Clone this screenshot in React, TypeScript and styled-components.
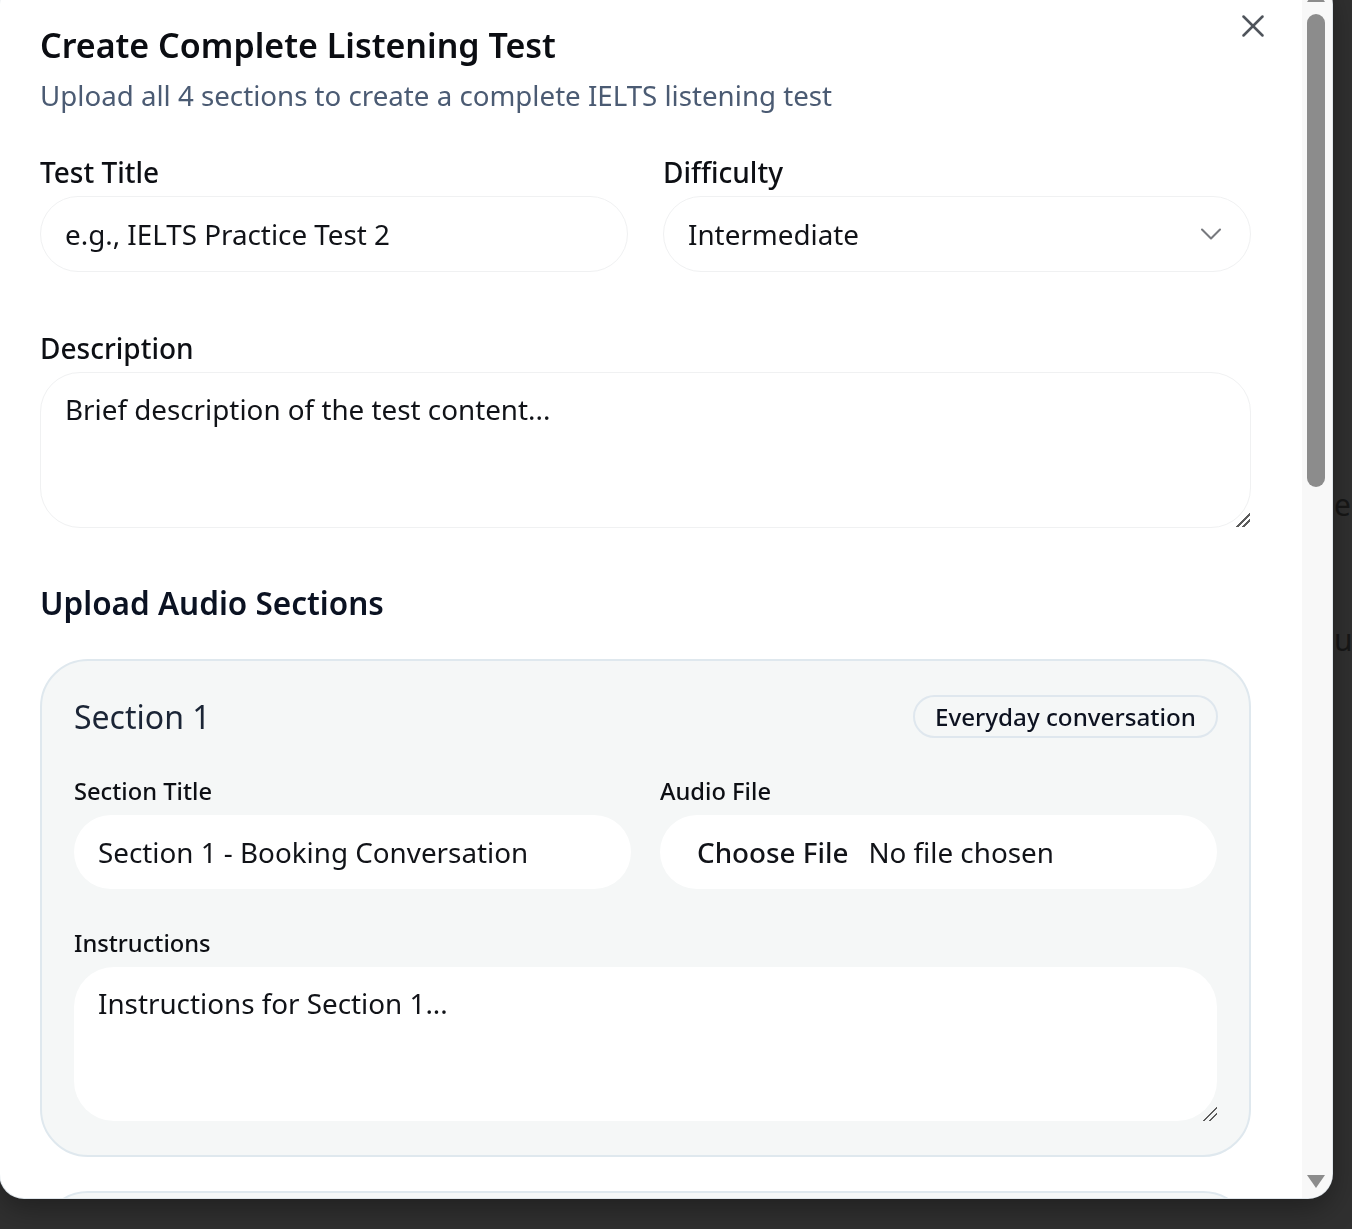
import React from "react";
import styled, { createGlobalStyle } from "styled-components";
import { X, ChevronDown } from "lucide-react";

const GlobalStyle = createGlobalStyle`
  html, body { margin: 0; padding: 0; }
  body {
    background: #303030;
    font-family: "Noto Sans", "Open Sans", sans-serif;
    overflow: hidden;
  }
  * { box-sizing: border-box; }
`;

const BackPage = styled.div`
  min-height: 100vh;
  padding: 487px 0 0 1334px;
  display: flex;
  flex-direction: column;
  gap: 99px;
`;

const BackText = styled.div`
  font-size: 30px;
  color: #171717;
  white-space: nowrap;
  line-height: 36px;
`;

const Modal = styled.div`
  position: fixed;
  left: 0;
  top: -20px;
  width: 1332px;
  height: 1218px;
  background: #ffffff;
  border-radius: 24px;
  box-shadow: 0 0 0 1px #dfe5ea, 0 10px 30px rgba(0, 0, 0, 0.35);
  overflow: hidden;
  display: flex;
`;

const ScrollArea = styled.div`
  flex: 1;
  min-width: 0;
  overflow: hidden;
  padding: 43px 51px 40px 40px;
`;

const ScrollTrack = styled.div`
  width: 30px;
  flex: none;
  background: #f8f8f8;
  display: flex;
  flex-direction: column;
  align-items: flex-start;
  padding-left: 5px;
`;

const ArrowButton = styled.div<{ $down?: boolean }>`
  height: 30px;
  width: 18px;
  flex: none;
  display: flex;
  justify-content: center;
  align-items: ${(p) => (p.$down ? "flex-start" : "flex-end")};
  padding: ${(p) => (p.$down ? "7px 0 0" : "0 0 8px")};
  margin-top: ${(p) => (p.$down ? "auto" : "0")};

  &::before {
    content: "";
    width: 0;
    height: 0;
    border-left: 9px solid transparent;
    border-right: 9px solid transparent;
    ${(p) =>
      p.$down
        ? "border-top: 13px solid #8c8c8c;"
        : "border-bottom: 13px solid #8c8c8c;"}
  }
`;

const Thumb = styled.div`
  margin-top: 4px;
  width: 18px;
  height: 473px;
  border-radius: 9px;
  background: #8c8c8c;
`;

const CloseButton = styled.button`
  position: absolute;
  top: 27px;
  right: 60px;
  width: 38px;
  height: 38px;
  padding: 0;
  border: none;
  background: transparent;
  color: #4f545b;
  display: flex;
  align-items: center;
  justify-content: center;
  cursor: pointer;
`;

const Header = styled.header`
  display: flex;
  flex-direction: column;
  gap: 10px;
  margin-bottom: 41px;
`;

const Title = styled.h1`
  margin: 0;
  font-size: 34px;
  line-height: 44px;
  font-weight: 600;
  color: #0b0d12;
`;

const Subtitle = styled.p`
  margin: 0;
  font-size: 27.7px;
  line-height: 36px;
  color: #4b5b73;
`;

const Grid = styled.div<{ $gap: number }>`
  display: grid;
  grid-template-columns: 1fr 1fr;
  column-gap: ${(p) => p.$gap}px;
`;

const Field = styled.div<{ $mb?: number; $gap?: number }>`
  display: flex;
  flex-direction: column;
  gap: ${(p) => p.$gap ?? 6}px;
  margin-bottom: ${(p) => p.$mb ?? 0}px;
`;

const Label = styled.label<{ $small?: boolean }>`
  font-size: ${(p) => (p.$small ? 23.7 : 28)}px;
  line-height: ${(p) => (p.$small ? 32 : 36)}px;
  font-weight: 500;
  color: #0d0f14;
`;

const TextInput = styled.input<{ $filled?: boolean }>`
  height: ${(p) => (p.$filled ? 74 : 76)}px;
  border-radius: 9999px;
  border: ${(p) => (p.$filled ? "none" : "1px solid #f0f1f2")};
  background: #ffffff;
  padding: 0 24px;
  font-family: inherit;
  font-size: 27.8px;
  color: #111318;
  outline: none;
  &::placeholder {
    color: #111318;
    opacity: 1;
  }
`;

const SelectWrap = styled.div`
  position: relative;
  display: flex;
`;

const Select = styled.select`
  appearance: none;
  flex: 1;
  height: 76px;
  border-radius: 9999px;
  border: 1px solid #f0f1f2;
  background: #ffffff;
  padding: 0 24px;
  font-family: inherit;
  font-size: 27.8px;
  color: #111318;
  outline: none;
`;

const SelectIcon = styled.span`
  position: absolute;
  right: 22px;
  top: 20px;
  width: 36px;
  height: 36px;
  color: #77797e;
  pointer-events: none;
  display: flex;
`;

const TextArea = styled.textarea<{ $filled?: boolean }>`
  height: ${(p) => (p.$filled ? 154 : 156)}px;
  border-radius: 40px;
  border: ${(p) => (p.$filled ? "none" : "1px solid #f0f1f2")};
  background: #ffffff;
  padding: 18px 24px;
  font-family: inherit;
  font-size: 27.8px;
  line-height: 36px;
  color: #111318;
  resize: vertical;
  outline: none;
  &::placeholder {
    color: #111318;
    opacity: 1;
  }
  &::-webkit-scrollbar {
    width: 18px;
    height: 18px;
  }
  &::-webkit-resizer {
    background: linear-gradient(
      135deg,
      transparent 0 52%,
      #5c5c5c 52% 60%,
      transparent 60% 72%,
      #5c5c5c 72% 80%,
      transparent 80%
    );
  }
`;

const SectionHeading = styled.h2`
  margin: 55px 0 36px;
  font-size: 31.5px;
  line-height: 40px;
  font-weight: 600;
  color: #0b1222;
`;

const CardList = styled.div`
  display: flex;
  flex-direction: column;
  gap: 34px;
`;

const Card = styled.section`
  background: #f5f7f7;
  border: 2px solid #dfe8ee;
  border-radius: 48px;
  padding: 34px 32px 34px;
  display: flex;
  flex-direction: column;
`;

const CardHeader = styled.div`
  display: flex;
  align-items: center;
  justify-content: space-between;
  margin-bottom: 37px;
`;

const CardTitle = styled.h3`
  margin: 0;
  font-size: 32px;
  line-height: 40px;
  font-weight: 400;
  color: #1b2536;
`;

const Badge = styled.span`
  display: inline-flex;
  align-items: center;
  height: 43px;
  padding: 0 20px;
  margin-right: -1px;
  border: 2px solid #dfe7ee;
  border-radius: 9999px;
  font-size: 24.2px;
  font-weight: 500;
  color: #0d1220;
`;

const FileBox = styled.div`
  height: 74px;
  border-radius: 9999px;
  background: #ffffff;
  display: flex;
  align-items: center;
  padding: 0 37px;
  gap: 20px;
  font-size: 27.8px;
  color: #111318;
`;

const FileButton = styled.span`
  font-weight: 500;
`;

const Footer = styled.div`
  display: flex;
  justify-content: flex-end;
  gap: 16px;
  margin-top: 40px;
`;

const Button = styled.button<{ $primary?: boolean }>`
  height: 64px;
  padding: 0 32px;
  border-radius: 9999px;
  font-family: inherit;
  font-size: 24px;
  font-weight: 500;
  border: ${(p) => (p.$primary ? "none" : "1px solid #e2e8f0")};
  background: ${(p) => (p.$primary ? "#0f172a" : "#ffffff")};
  color: ${(p) => (p.$primary ? "#ffffff" : "#0f172a")};
`;

const sections = [
  { n: 1, badge: "Everyday conversation", title: "Section 1 - Booking Conversation" },
  { n: 2, badge: "Everyday monologue", title: "Section 2 - Local Information" },
  { n: 3, badge: "Educational conversation", title: "Section 3 - Study Discussion" },
  { n: 4, badge: "Academic lecture", title: "Section 4 - Academic Lecture" },
];

export default function App() {
  return (
    <>
      <GlobalStyle />
      <BackPage>
        <BackText>es</BackText>
        <BackText>u</BackText>
      </BackPage>
      <Modal role="dialog">
        <ScrollArea>
          <Header>
            <Title>Create Complete Listening Test</Title>
            <Subtitle>Upload all 4 sections to create a complete IELTS listening test</Subtitle>
          </Header>

          <Grid $gap={35}>
            <Field $mb={58}>
              <Label>Test Title</Label>
              <TextInput placeholder="e.g., IELTS Practice Test 2" />
            </Field>
            <Field $mb={58}>
              <Label>Difficulty</Label>
              <SelectWrap>
                <Select defaultValue="intermediate">
                  <option value="beginner">Beginner</option>
                  <option value="intermediate">Intermediate</option>
                  <option value="advanced">Advanced</option>
                </Select>
                <SelectIcon>
                  <ChevronDown size={36} strokeWidth={1.4} />
                </SelectIcon>
              </SelectWrap>
            </Field>
          </Grid>

          <Field>
            <Label>Description</Label>
            <TextArea placeholder="Brief description of the test content..." />
          </Field>

          <SectionHeading>Upload Audio Sections</SectionHeading>

          <CardList>
            {sections.map((s) => (
              <Card key={s.n}>
                <CardHeader>
                  <CardTitle>Section {s.n}</CardTitle>
                  <Badge>{s.badge}</Badge>
                </CardHeader>
                <Grid $gap={29}>
                  <Field $mb={38} $gap={8}>
                    <Label $small>Section Title</Label>
                    <TextInput $filled placeholder={s.title} />
                  </Field>
                  <Field $mb={38} $gap={8}>
                    <Label $small>Audio File</Label>
                    <FileBox>
                      <FileButton>Choose File</FileButton>
                      <span>No file chosen</span>
                    </FileBox>
                  </Field>
                </Grid>
                <Field $gap={8}>
                  <Label $small>Instructions</Label>
                  <TextArea $filled placeholder={`Instructions for Section ${s.n}...`} />
                </Field>
              </Card>
            ))}
          </CardList>

          <Footer>
            <Button>Cancel</Button>
            <Button $primary>Create Test</Button>
          </Footer>
        </ScrollArea>
        <ScrollTrack aria-hidden="true">
          <ArrowButton />
          <Thumb />
          <ArrowButton $down />
        </ScrollTrack>
        <CloseButton aria-label="Close">
          <X size={38} strokeWidth={1.6} />
        </CloseButton>
      </Modal>
    </>
  );
}
